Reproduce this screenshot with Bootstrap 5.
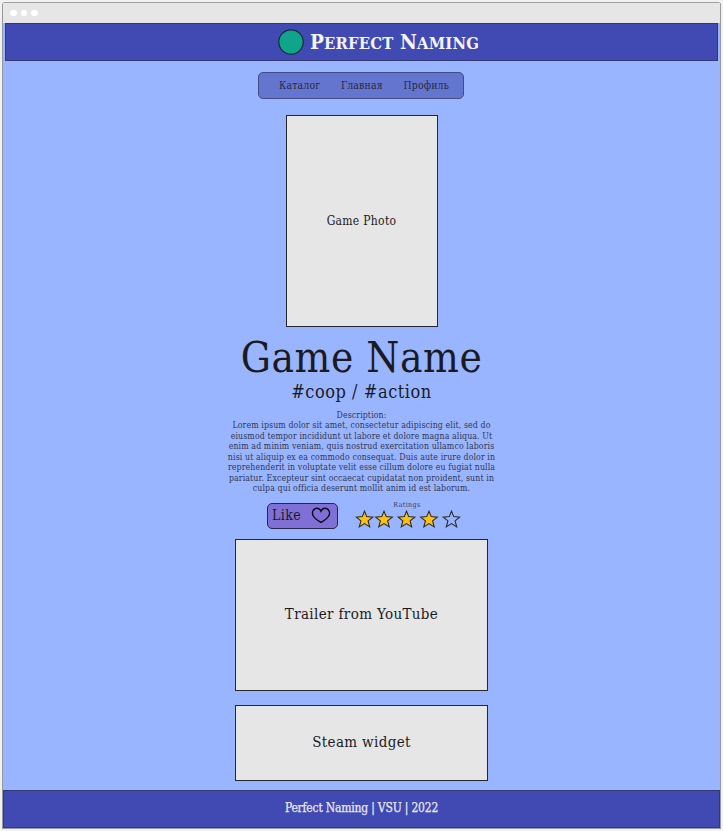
<!DOCTYPE html>
<html lang="en">
<head>
<meta charset="utf-8">
<meta name="viewport" content="width=device-width, initial-scale=1">
<title>Perfect Naming</title>
<link rel="stylesheet" href="https://cdn.jsdelivr.net/npm/bootstrap@5.3.0/dist/css/bootstrap.min.css">
<style>
body{background:#f1f1f1;font-family:"DejaVu Serif Condensed","DejaVu Serif",serif;font-stretch:condensed;color:#1b1b1f;overflow:hidden}
.window-frame{width:719px;height:827px;margin:2px 0 0 2px;border:1px solid #999;border-top-color:#a0a0a0;border-radius:3px 3px 0 0;background:#9ab5ff}
.window-bar{height:20px;background:#e6e6e6;padding-left:7px;gap:4px}
.window-dot{width:6.5px;height:6.5px;border-radius:50%;background:#fff}
.site-header{height:38px;margin:0 2px 0 2px;background:#414ab2;border:1px solid #343a70;color:#f4f4fa}
.brand-wrap{margin-left:34px}
.brand-dot{width:26px;height:26px}
.brand-name{font-size:20.5px;line-height:26px;padding-top:1px;font-weight:700;margin-left:6px;white-space:nowrap;text-transform:uppercase;letter-spacing:.18px}
.brand-tail{font-size:16.5px}
.menu{width:206px;height:27px;margin:11px 0 0 -1px;border:1px solid #434c83;border-radius:5px;background:#6475d0;font-size:10.4px;letter-spacing:.18px;padding:1px 14px 0 20px}
.menu a{color:#25293d;text-decoration:none}
.panel-box{background:#e6e6e6;border:1px solid #26272d;flex:none}
.photo{width:152px;height:212px;margin-top:16px;font-size:12px;letter-spacing:.3px}
.game-name{font-size:42px;line-height:50px;margin-top:6px;font-weight:400;letter-spacing:.55px;white-space:nowrap}
.tags{font-size:18px;line-height:22px;margin-top:-2px;letter-spacing:.55px;white-space:nowrap}
.about{font-size:8.7px;line-height:10.45px;margin-top:7px;height:84px;letter-spacing:.12px;color:#30374f;white-space:nowrap}
.actions{width:194px;height:30px;margin:8px 0 0 5px}
.like{width:71px;height:26px;margin-top:1px;border:1px solid #292646;border-radius:5px;background:#816fd8;padding:0 6px 2px 4px;font-size:14px;letter-spacing:.4px;color:#1b1b1f}
.rating{width:106px;margin-top:-1px}
.rating-label{font-size:7px;line-height:9px;color:#343b59;letter-spacing:.4px;padding-right:2px}
.wide{width:253px;font-size:15px;letter-spacing:.36px}
.trailer{height:152px;margin-top:7px;padding-bottom:1px}
.steam{height:76px;margin-top:14px;padding-bottom:2px}
.site-footer{height:38px;background:#414ab2;border:1px solid #343a70;color:#e8e9f6;font-size:12px;letter-spacing:-.2px;-webkit-text-stroke:.25px #e8e9f6;padding-bottom:3px}
</style>
<script src="https://cdn.jsdelivr.net/npm/bootstrap@5.3.0/dist/js/bootstrap.bundle.min.js"></script>
</head>
<body>
<div class="window-frame d-flex flex-column">
  <div class="window-bar d-flex align-items-center flex-shrink-0"><span class="window-dot"></span><span class="window-dot"></span><span class="window-dot"></span></div>
  <header class="site-header d-flex justify-content-center align-items-center flex-shrink-0">
    <div class="brand-wrap d-flex align-items-center">
      <svg class="brand-dot" viewBox="0 0 26 26"><circle cx="13" cy="13" r="12.2" fill="#10a58a" stroke="#172b35" stroke-width="1.2"/></svg>
      <span class="brand-name">P<span class="brand-tail">erfect</span> N<span class="brand-tail">aming</span></span>
    </div>
  </header>
  <main class="d-flex flex-column align-items-center flex-grow-1">
    <nav class="menu d-flex justify-content-between align-items-center flex-shrink-0"><a href="#">Каталог</a><a href="#">Главная</a><a href="#">Профиль</a></nav>
    <div class="panel-box photo d-flex justify-content-center align-items-center"><span>Game Photo</span></div>
    <h1 class="game-name mb-0">Game Name</h1>
    <div class="tags">#coop / #action</div>
    <div class="about text-center">Description:<br>Lorem ipsum dolor sit amet, consectetur adipiscing elit, sed do<br>eiusmod tempor incididunt ut labore et dolore magna aliqua. Ut<br>enim ad minim veniam, quis nostrud exercitation ullamco laboris<br>nisi ut aliquip ex ea commodo consequat. Duis aute irure dolor in<br>reprehenderit in voluptate velit esse cillum dolore eu fugiat nulla<br>pariatur. Excepteur sint occaecat cupidatat non proident, sunt in<br>culpa qui officia deserunt mollit anim id est laborum.</div>
    <div class="actions d-flex justify-content-between align-items-start">
      <button class="like d-flex justify-content-between align-items-center" type="button"><span>Like</span>
        <svg width="20" height="18" viewBox="0 0 20 18"><path d="M10 5.200C8.700 2.400 5.800 1.700 3.800 2.900 1.400 4.300.9 7.400 2.300 10 3.800 12.600 7 14.700 10 16.400c3-1.700 6.200-3.800 7.700-6.400C19.100 7.400 18.600 4.300 16.200 2.900 14.200 1.700 11.300 2.400 10 5.200Z" fill="none" stroke="#0c0a18" stroke-width="1.5"/></svg>
      </button>
      <div class="rating text-center"><div class="rating-label">Ratings</div>
        <svg class="d-block" width="106" height="19" viewBox="0 0 106 19">
          <defs><path id="star" d="M0-8.300 2.200-2.900 8.300-2.400 3.600 1.400 5.200 7.400 0 4.100-5.200 7.400-3.600 1.400-8.300-2.400-2.200-2.900Z" stroke="#2a2a2c" stroke-width="1.1" stroke-linejoin="miter"/></defs>
          <g fill="#fcc010"><use href="#star" x="9.500" y="9.500"/><use href="#star" x="29" y="9.500"/><use href="#star" x="51.500" y="9.500"/><use href="#star" x="74" y="9.500"/></g>
          <use href="#star" x="96.500" y="9.500" fill="none"/>
        </svg>
      </div>
    </div>
    <div class="panel-box wide trailer d-flex justify-content-center align-items-center"><span>Trailer from YouTube</span></div>
    <div class="panel-box wide steam d-flex justify-content-center align-items-center"><span>Steam widget</span></div>
  </main>
  <footer class="site-footer d-flex justify-content-center align-items-center flex-shrink-0"><span>Perfect Naming | VSU | 2022</span></footer>
</div>
</body>
</html>
